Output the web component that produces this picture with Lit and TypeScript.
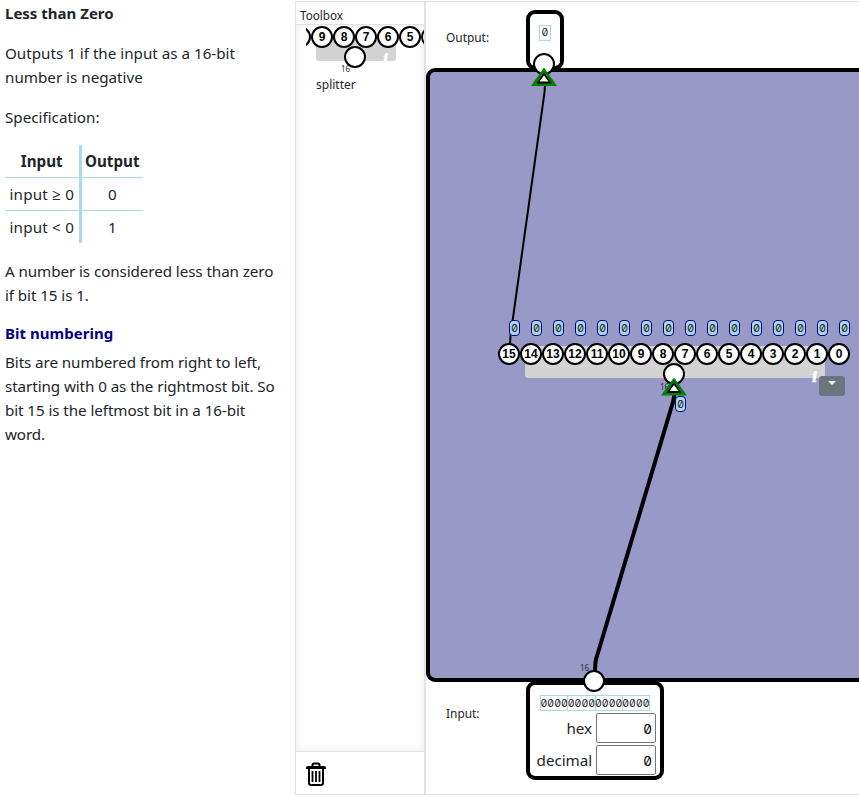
import { LitElement, html, css } from "lit";
import { customElement } from "lit/decorators.js";

const BITS = Array.from({ length: 16 }, (_, i) => 15 - i);

@customElement("app-root")
export class AppRoot extends LitElement {
  static styles = css`
    :host {
      display: flex;
      width: 859px;
      height: 802px;
      overflow: hidden;
      background: #fff;
      color: #212529;
      font: 15.2px/24px "Noto Sans", "Open Sans", sans-serif;
      box-sizing: border-box;
    }
    * { box-sizing: border-box; }
    .info { width: 295px; padding: 1px 0 0 5px; flex: none; white-space: nowrap; }
    p { margin: 0 0 16px; }
    h1 { font-size: 15px; font-weight: 700; margin: 0 0 16px; line-height: 24px; }
    h2 { font-size: 15px; font-weight: 700; margin: 0 0 5px; line-height: 24px; color: #00008b; letter-spacing: 0.04px; }
    .tail { margin-bottom: 14px; }
    .tight { letter-spacing: -0.08px; }
    .ln { display: block; width: max-content; }
    table { border-collapse: collapse; margin: 0 0 16px; table-layout: fixed; width: 138px; height: 98px; }
    th, td { padding: 1px 0 0; text-align: center; height: 33px; line-height: 23px; }
    th { height: 32px; letter-spacing: 0.02px; }
    td:first-child { letter-spacing: 0.2px; }
    tr > :first-child { width: 75px; border-right: 3px solid lightblue; }
    tr + tr > * { border-top: 1px solid lightblue; }
    .tools { width: 130px; flex: none; margin-top: 1px; height: 794px; border: 1px solid #e2e2e2; display: flex; flex-direction: column; }
    .tools header { height: 23px; border-bottom: 1px solid #e2e2e2; font-size: 11.7px; line-height: 27px; padding-left: 4px; }
    .shelf { flex: 1; box-shadow: inset 0 0 10px #ececec; padding-left: 10px; overflow: hidden; }
    .part { position: relative; height: 50px; overflow: hidden; }
    .part .body { position: absolute; left: 10px; top: 10px; width: 80px; height: 26px; }
    .part .pins { position: absolute; left: -17px; top: 1px; }
    .part .in { position: absolute; left: 38px; top: 21px; }
    .part .w { position: absolute; left: 35px; top: 39px; }
    .part .i { position: absolute; left: 77px; top: 27px; }
    .name { font-size: 12px; line-height: 20px; padding-left: 10px; }
    .bin { height: 43px; border-top: 1px solid #e2e2e2; padding: 10px; }
    .bin svg { display: block; }
    .work { flex: 1; margin-top: 1px; height: 794px; border: 1px solid #e2e2e2; border-width: 1px 0 1px 1px; position: relative; display: flex; flex-direction: column; overflow: hidden; }
    .row { height: 66px; padding-left: 20px; font-size: 11.9px; line-height: 71px; flex: none; }
    .row.low { line-height: 63px; }
    .board { height: 614px; flex: none; width: 450px; border: 4px solid #000; border-radius: 9px; background: #9999c8; }
    .wires { position: absolute; left: 0; top: 0; }
    .body { background: #d3d3d3; border-radius: 3px; }
    .pins { display: flex; }
    .pin { width: 22px; height: 22px; flex: none; border: 2px solid #000; border-radius: 50%; background: #fff; color: #000; font: bold 12px/18px "Liberation Sans", Arial, sans-serif; text-align: center; display: flex; justify-content: center; }
    .w { font-size: 8px; line-height: 10px; color: #333; }
    .i { font: italic bold 14px/14px "DejaVu Serif", serif; color: #fff; -webkit-text-stroke: 0.4px #fff; }
    .mono { font-family: Inter, "DejaVu Sans Mono", monospace; font-feature-settings: "zero" 1, "tnum" 1; }
    .box { position: absolute; border: 4px solid #000; border-radius: 9px; background: #fff; }
    .outbox { left: 100px; top: 8px; width: 38px; height: 60px; padding-top: 11px; display: flex; justify-content: center; align-items: flex-start; }
    .cell { border: 1px solid lightblue; width: 12px; height: 16px; font-size: 10.5px; line-height: 14px; text-align: center; display: flex; justify-content: center; }
    .inbox { left: 100px; top: 679px; width: 138px; height: 99px; padding: 10px 4px 0; }
    .word { display: flex; margin: 0 0 2px 6px; border: 1px solid lightblue; width: 110px; height: 16px; font-size: 10.5px; line-height: 15px; color: #212529; }
    .word span { flex: 1 1 0; min-width: 0; letter-spacing: 0; display: flex; justify-content: center; }
    .word span + span { border-left: 1px solid lightblue; }
    .field { display: flex; justify-content: flex-end; align-items: center; gap: 4px; height: 30px; margin-bottom: 2px; letter-spacing: -0.05px; }
    .val { width: 60px; height: 30px; border: 1px solid #767676; border-radius: 2px; color: #000; font-size: 13.5px; line-height: 30px; text-align: right; padding-right: 3px; }
    .node { position: absolute; left: 72px; top: 318px; width: 352px; }
    .flags { display: flex; padding-left: 11px; gap: 11px; margin-bottom: 7px; }
    .flag { width: 11px; height: 16px; flex: none; border: 1px solid #00008b; border-radius: 4px; background: lightblue; font-size: 11px; line-height: 14px; color: #212529; display: flex; justify-content: center; }
    .node .body { position: absolute; left: 27px; top: 26px; width: 300px; height: 32px; }
    .node .pins { position: relative; }
    .node .i { position: absolute; left: 314px; top: 50px; }
    .node .w { position: absolute; left: 162px; top: 62px; }
    .menu { position: absolute; left: 321px; top: 56px; width: 26px; height: 20px; border-radius: 3px; background: #6c757d; display: flex; justify-content: center; padding-top: 5px; }
    .menu svg { display: block; }
    .at { position: absolute; }
    .outpin { left: 107px; top: 51px; }
    .splitpin { left: 237px; top: 361px; }
    .inpin { left: 157px; top: 668px; }
    .inw { left: 154px; top: 661px; }
    .inflag { left: 249px; top: 394px; }
  `;

  private pins(bits: (number | string)[]) {
    return html`<div class="pins">${bits.map((b) => html`<div class="pin">${b}</div>`)}</div>`;
  }

  render() {
    return html`
      <section class="info">
        <h1><span class="ln">Less than Zero</span></h1>
        <p><span class="ln">Outputs 1 if the input as a 16-bit</span><span class="ln">number is negative</span></p>
        <p><span class="ln">Specification:</span></p>
        <table>
          <tr><th>Input</th><th>Output</th></tr>
          <tr><td>input ≥ 0</td><td>0</td></tr>
          <tr><td>input &lt; 0</td><td>1</td></tr>
        </table>
        <p class="tight tail"><span class="ln">A number is considered less than zero</span><span class="ln">if bit 15 is 1.</span></p>
        <h2><span class="ln">Bit numbering</span></h2>
        <p class="tight"><span class="ln">Bits are numbered from right to left,</span><span class="ln">starting with 0 as the rightmost bit. So</span><span class="ln">bit 15 is the leftmost bit in a 16-bit</span><span class="ln">word.</span></p>
      </section>

      <aside class="tools">
        <header>Toolbox</header>
        <div class="shelf">
          <div class="part">
            <div class="body"></div>
            ${this.pins(["", 9, 8, 7, 6, 5, ""])}
            <div class="pin in"></div>
            <span class="w">16</span><span class="i">i</span>
          </div>
          <div class="name">splitter</div>
        </div>
        <div class="bin">
          <svg width="20" height="25" viewBox="0 0 20 25" fill="none" stroke="#000">
            <path d="M6.500 4.500V3Q6.500 1.500 8 1.500H12Q13.500 1.500 13.500 3V4.500" stroke-width="2" />
            <path d="M0 7V5.500Q0 4 2 4H18Q20 4 20 5.500V7Z" fill="#000" stroke="none" />
            <path d="M3 6.500V21Q3 23 5 23H15Q17 23 17 21V6.500" stroke-width="2" />
            <path d="M6.500 9V20M10 9V20M13.500 9V20" stroke-width="1.800" />
          </svg>
        </div>
      </aside>

      <main class="work">
        <div class="row">Output:</div>
        <div class="board"></div>
        <div class="row low">Input:</div>

        <div class="box outbox"><div class="cell mono">0</div></div>
        <div class="box inbox">
          <div class="word mono">${[0, 1, 2, 3].map(() => html`<span>0000</span>`)}</div>
          <div class="field">hex<div class="val mono">0</div></div>
          <div class="field">decimal<div class="val mono">0</div></div>
        </div>

        <svg class="wires" width="433" height="792" viewBox="426 2 433 792" fill="none" stroke="#000">
          <path d="M544.5 78Q545.5 87 544 96L512 325Q510 335 510 346" stroke-width="2" />
          <path d="M674 388Q675 395 673 402L597 656Q595 660 595 674" stroke-width="4" />
        </svg>

        <div class="node">
          <div class="body"></div>
          <div class="flags">${BITS.map(() => html`<div class="flag mono">0</div>`)}</div>
          ${this.pins(BITS)}
          <span class="w">16</span><span class="i">i</span>
          <div class="menu"><svg width="8" height="4" viewBox="0 0 8 4"><path d="M0 0H8L4 4Z" fill="#fff" /></svg></div>
        </div>

        <div class="at pin outpin"></div>
        <div class="at pin splitpin"></div>
        <div class="at pin inpin"></div>
        <span class="at w inw">16</span>
        <div class="at flag mono inflag">0</div>

        <svg class="wires" width="433" height="792" viewBox="426 2 433 792">
          <path d="M544 67.5L557 86H531Z" fill="#008000" />
          <path d="M544 72.5L551.5 83.5H536.5Z" fill="#000" />
          <path d="M544 75.5L548.5 81.5H539.5Z" fill="#fff" />
          <path d="M674 377.5L687 395.5H661Z" fill="#008000" />
          <path d="M674 382L681.5 393H666.5Z" fill="#000" />
          <path d="M674 385L678.5 391H669.5Z" fill="#fff" />
        </svg>
      </main>
    `;
  }
}
